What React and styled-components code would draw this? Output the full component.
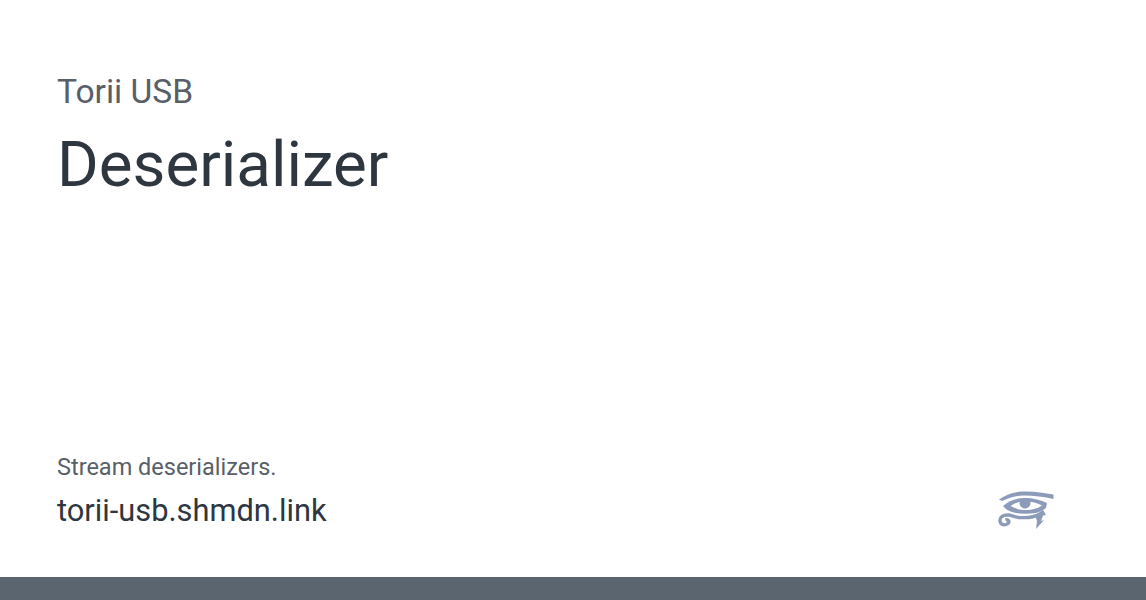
import React from "react";
import styled, { createGlobalStyle } from "styled-components";

const Global = createGlobalStyle`
  html, body {
    margin: 0;
    padding: 0;
    background: #fff;
  }
  body {
    font-family: Roboto, "Liberation Sans", sans-serif;
  }
`;

export default function App() {
  return (
    <>
      <Global />
      <Page>
        <Content>
          <Header>
            <SiteName>Torii USB</SiteName>
            <Title>Deserializer</Title>
          </Header>
          <Bottom>
            <Meta>
              <Description>Stream deserializers.</Description>
              <Domain>torii-usb.shmdn.link</Domain>
            </Meta>
            <Logo viewBox="0 0 56 40" aria-hidden="true">
              {/* brow */}
              <path d="M1 9.5 C7 5 15 2 24 1.5 C34 1 46 2.5 55.5 4.5 L55.5 9 C46 7 36 5.5 26 5.5 C18 5.5 10 8 4 11 Z" />
              {/* lids, white of the eye, pupil */}
              <path d="M5 16 C11 10.5 19 8 27 8 C35 8 43 10 49 13 L48 18 C45 20 42 22 38 23 C30 24 20 24 14 22 C10 20.5 7 18.5 5 16 Z" />
              <Sclera d="M12.5 16 C16 13.5 20 12 24 11.5 C32 11 38 12 44 15.5 C40 18 36 19.5 30 20 C24 20.5 18 19 12.5 16 Z" />
              <path d="M21.5 13 C21.5 10 24 8 27 8 C30 8 32.5 10 32.5 13 C32.5 16 30 18.5 27 18.5 C24 18.5 21.5 16 21.5 13 Z" />
              {/* spiral tail and tear */}
              <Tail d="M42 24 C36 27.5 28 28 21 27.5 C17 27 14 25.5 11 25 C5 24.5 1.5 27 2 31 C2.5 35 7 36 10 33.5 C12 31.5 10 29 7.5 30" />
              <path d="M37 25 L45 20 L48 25 L45 25.5 L43 31 L46 30 L38 39 L39 31 Z" />
            </Logo>
          </Bottom>
        </Content>
        <Footer />
      </Page>
    </>
  );
}

const Page = styled.div`
  display: flex;
  flex-direction: column;
  width: 1146px;
  height: 600px;
  overflow: hidden;
`;

const Content = styled.main`
  flex: 1;
  display: flex;
  flex-direction: column;
  justify-content: space-between;
  padding: 73px 92px 47px 57px;
`;

const Header = styled.header`
  display: flex;
  flex-direction: column;
`;

const SiteName = styled.div`
  font-size: 33.6px;
  line-height: 38px;
  color: #595f69;
`;

const Title = styled.h1`
  margin: 14px 0 0 0;
  font-size: 63.7px;
  line-height: 80px;
  font-weight: 400;
  color: #2e3640;
`;

const Bottom = styled.div`
  display: flex;
  justify-content: space-between;
  align-items: flex-end;
`;

const Meta = styled.div`
  display: flex;
  flex-direction: column;
  gap: 11px;
`;

const Description = styled.div`
  font-size: 23.5px;
  line-height: 28px;
  color: #595f69;
`;

const Domain = styled.div`
  font-size: 30.8px;
  line-height: 38px;
  color: #2e3640;
`;

const Logo = styled.svg`
  width: 56px;
  height: 40px;
  fill: #8d9bba;
`;

const Sclera = styled.path`
  fill: #fff;
`;

const Tail = styled.path`
  fill: none;
  stroke: #8d9bba;
  stroke-width: 3.4;
`;

const Footer = styled.footer`
  height: 23px;
  background: #5b6570;
`;
